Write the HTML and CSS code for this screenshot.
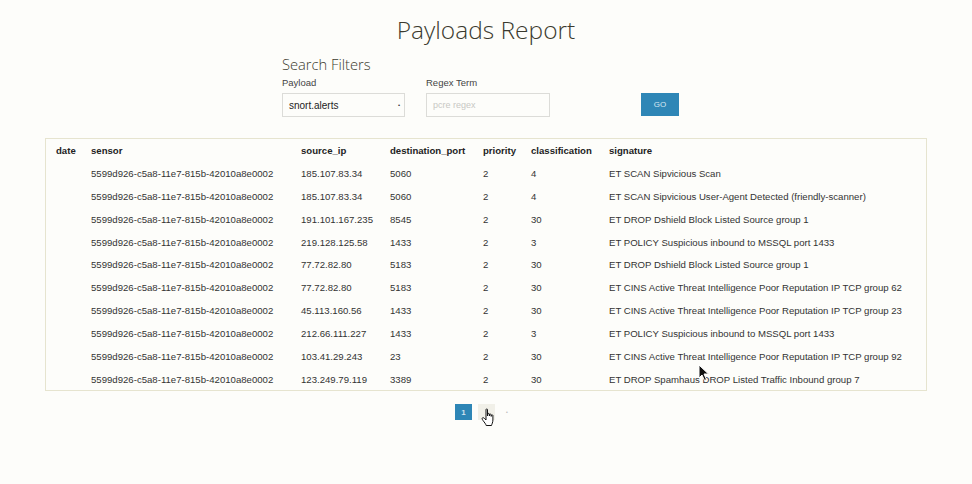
FILE: index.html
```html
<!DOCTYPE html>
<html>
<head>
<meta charset="utf-8">
<link rel="stylesheet" href="styles.css">
</head>
<body>
<h1 class="title">Payloads Report</h1>
<div class="filters">
  <h2 class="filters-title">Search Filters</h2>
  <div class="filters-row">
    <div class="field field-payload">
      <label class="label">Payload</label>
      <div class="select"><span>snort.alerts</span><span class="caret">&#8226;</span></div>
    </div>
    <div class="field field-regex">
      <label class="label">Regex Term</label>
      <div class="input">pcre regex</div>
    </div>
    <button class="go">GO</button>
  </div>
</div>
<div class="box">
  <table class="grid">
    <colgroup>
      <col class="c-date"><col class="c-sensor"><col class="c-ip"><col class="c-port"><col class="c-prio"><col class="c-class"><col>
    </colgroup>
    <thead>
      <tr><th>date</th><th>sensor</th><th>source_ip</th><th>destination_port</th><th>priority</th><th>classification</th><th>signature</th></tr>
    </thead>
    <tbody>
      <tr><td></td><td>5599d926-c5a8-11e7-815b-42010a8e0002</td><td>185.107.83.34</td><td>5060</td><td>2</td><td>4</td><td>ET SCAN Sipvicious Scan</td></tr>
      <tr><td></td><td>5599d926-c5a8-11e7-815b-42010a8e0002</td><td>185.107.83.34</td><td>5060</td><td>2</td><td>4</td><td>ET SCAN Sipvicious User-Agent Detected (friendly-scanner)</td></tr>
      <tr><td></td><td>5599d926-c5a8-11e7-815b-42010a8e0002</td><td>191.101.167.235</td><td>8545</td><td>2</td><td>30</td><td>ET DROP Dshield Block Listed Source group 1</td></tr>
      <tr><td></td><td>5599d926-c5a8-11e7-815b-42010a8e0002</td><td>219.128.125.58</td><td>1433</td><td>2</td><td>3</td><td>ET POLICY Suspicious inbound to MSSQL port 1433</td></tr>
      <tr><td></td><td>5599d926-c5a8-11e7-815b-42010a8e0002</td><td>77.72.82.80</td><td>5183</td><td>2</td><td>30</td><td>ET DROP Dshield Block Listed Source group 1</td></tr>
      <tr><td></td><td>5599d926-c5a8-11e7-815b-42010a8e0002</td><td>77.72.82.80</td><td>5183</td><td>2</td><td>30</td><td>ET CINS Active Threat Intelligence Poor Reputation IP TCP group 62</td></tr>
      <tr><td></td><td>5599d926-c5a8-11e7-815b-42010a8e0002</td><td>45.113.160.56</td><td>1433</td><td>2</td><td>30</td><td>ET CINS Active Threat Intelligence Poor Reputation IP TCP group 23</td></tr>
      <tr><td></td><td>5599d926-c5a8-11e7-815b-42010a8e0002</td><td>212.66.111.227</td><td>1433</td><td>2</td><td>3</td><td>ET POLICY Suspicious inbound to MSSQL port 1433</td></tr>
      <tr><td></td><td>5599d926-c5a8-11e7-815b-42010a8e0002</td><td>103.41.29.243</td><td>23</td><td>2</td><td>30</td><td>ET CINS Active Threat Intelligence Poor Reputation IP TCP group 92</td></tr>
      <tr><td></td><td>5599d926-c5a8-11e7-815b-42010a8e0002</td><td>123.249.79.119</td><td>3389</td><td>2</td><td>30</td><td>ET DROP Spamhaus DROP Listed Traffic Inbound group 7</td></tr>
    </tbody>
  </table>
</div>
<div class="pager">
  <span class="page active">1</span>
  <span class="page hover"></span>
  <span class="page more">&#8226;</span>
</div>
<svg class="cursor-arrow" width="12" height="18" viewBox="0 0 12 18"><path d="M1 1 L1 14 L4 11 L6.5 16.5 L8.5 15.5 L6 10 L10.5 10 Z" fill="#111" stroke="#fff" stroke-width="1"/></svg>
<svg class="cursor-hand" width="16" height="19" viewBox="0 0 16 19"><path d="M5 1.5 C5 0.8 6.5 0.8 6.5 1.5 L6.5 8 L6.8 6 C6.8 5.2 8.3 5.2 8.3 6 L8.4 8 L8.6 6.6 C8.6 5.9 10.1 5.9 10.1 6.6 L10.2 8.4 L10.4 7.4 C10.4 6.7 11.9 6.7 11.9 7.4 L11.9 12 C11.9 14.5 10.8 16 10.5 17.5 L5.2 17.5 C4.8 16 3.5 14.5 2 12.5 C1.2 11.4 0.8 10.3 1.5 9.8 C2.2 9.3 3 9.9 5 12 Z" fill="#fff" stroke="#111" stroke-width="1" stroke-linejoin="round"/></svg>
</body>
</html>
```
FILE: styles.css
```css
html, body {
  margin: 0;
  padding: 0;
}
body {
  width: 972px;
  height: 484px;
  background: #fdfdfa;
  color: #333;
  font-family: "Liberation Sans", Arial, sans-serif;
  position: relative;
  overflow: hidden;
}
.title {
  margin: 0;
  padding-top: 12px;
  text-align: center;
  font-family: "Open Sans", sans-serif;
  font-weight: 300;
  font-size: 24.5px;
  line-height: 36px;
  color: #3b3a2e;
}
.filters {
  width: 408px;
  margin: 6px auto 0;
}
.filters-title {
  margin: 0;
  font-family: "Open Sans", sans-serif;
  font-weight: 300;
  font-size: 14.7px;
  line-height: 20px;
  color: #3b3a2e;
}
.filters-row {
  display: flex;
  align-items: flex-end;
  margin-top: 3px;
}
.field {
  display: flex;
  flex-direction: column;
}
.field-payload {
  width: 123px;
  margin-right: 21px;
}
.field-regex {
  width: 124px;
  margin-right: 91px;
}
.label {
  font-size: 9.5px;
  line-height: 12px;
  color: #444;
  margin-bottom: 4px;
}
.select, .input {
  height: 22px;
  border: 1px solid #dcdcd8;
  background: #fdfdfa;
  display: flex;
  align-items: center;
  box-sizing: content-box;
}
.select {
  justify-content: space-between;
  font-size: 10px;
  color: #222;
  padding: 0 4px 0 6px;
  width: 111px;
}
.select .caret {
  font-size: 6px;
  color: #333;
}
.input {
  font-size: 9px;
  color: #c8c8c4;
  width: 116px;
  padding: 0 0 0 6px;
}
.go {
  width: 38px;
  height: 23px;
  margin-bottom: 1px;
  border: none;
  background: #2e86b6;
  color: #d8e8f2;
  font-family: "Liberation Sans", Arial, sans-serif;
  font-size: 8px;
  padding: 0;
}
.box {
  margin: 21px 0 0 45px;
  width: 870px;
  height: 251px;
  border: 1px solid #e6e4cf;
  padding: 0 0 0 10px;
}
.grid {
  border-collapse: collapse;
  font-size: 9.6px;
  color: #333;
}
.grid th, .grid td {
  padding: 0;
  text-align: left;
  white-space: nowrap;
  height: 22.9px;
}
.grid th {
  font-weight: bold;
  color: #222;
}
.c-date { width: 35px; }
.c-sensor { width: 210px; }
.c-ip { width: 89px; }
.c-port { width: 93px; }
.c-prio { width: 48px; }
.c-class { width: 78px; }
.pager {
  display: flex;
  align-items: center;
  margin: 13px 0 0 455px;
  gap: 6px;
}
.page {
  width: 17px;
  height: 16px;
  display: flex;
  align-items: center;
  justify-content: center;
  font-size: 8px;
  font-weight: bold;
}
.page.active {
  background: #2e86b6;
  color: #cfe3ef;
}
.page.hover {
  background: #f1f0e8;
}
.page.more {
  color: #bbb;
  font-size: 5px;
  width: 12px;
}
.cursor-arrow {
  position: absolute;
  left: 698px;
  top: 364px;
}
.cursor-hand {
  position: absolute;
  left: 481px;
  top: 408px;
}
```
